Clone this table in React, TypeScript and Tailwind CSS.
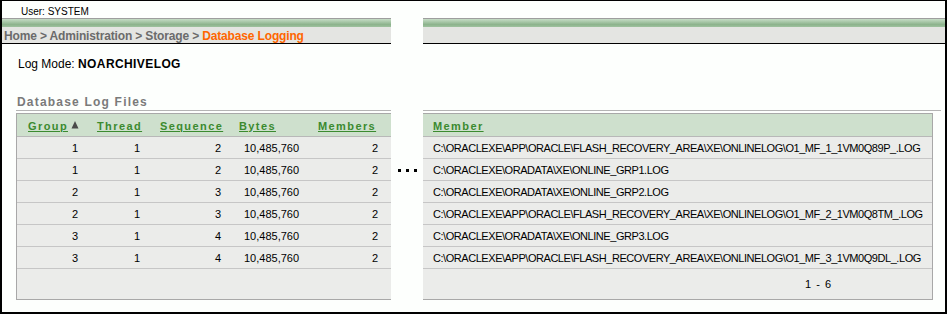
import type { ReactNode } from "react";

type LogFile = {
  group: number;
  thread: number;
  sequence: number;
  bytes: string;
  members: number;
  member: string;
};

const LOG_FILES: LogFile[] = [
  { group: 1, thread: 1, sequence: 2, bytes: "10,485,760", members: 2, member: "C:\\ORACLEXE\\APP\\ORACLE\\FLASH_RECOVERY_AREA\\XE\\ONLINELOG\\O1_MF_1_1VM0Q89P_.LOG" },
  { group: 1, thread: 1, sequence: 2, bytes: "10,485,760", members: 2, member: "C:\\ORACLEXE\\ORADATA\\XE\\ONLINE_GRP1.LOG" },
  { group: 2, thread: 1, sequence: 3, bytes: "10,485,760", members: 2, member: "C:\\ORACLEXE\\ORADATA\\XE\\ONLINE_GRP2.LOG" },
  { group: 2, thread: 1, sequence: 3, bytes: "10,485,760", members: 2, member: "C:\\ORACLEXE\\APP\\ORACLE\\FLASH_RECOVERY_AREA\\XE\\ONLINELOG\\O1_MF_2_1VM0Q8TM_.LOG" },
  { group: 3, thread: 1, sequence: 4, bytes: "10,485,760", members: 2, member: "C:\\ORACLEXE\\ORADATA\\XE\\ONLINE_GRP3.LOG" },
  { group: 3, thread: 1, sequence: 4, bytes: "10,485,760", members: 2, member: "C:\\ORACLEXE\\APP\\ORACLE\\FLASH_RECOVERY_AREA\\XE\\ONLINELOG\\O1_MF_3_1VM0Q9DL_.LOG" },
];

const COLS = "grid grid-cols-[71px_62px_81px_75px_85px]";

function Band({ children }: { children?: ReactNode }) {
  return (
    <div>
      <div className="h-px bg-[#9e9e9e]" />
      <div className="h-[8px] bg-[linear-gradient(to_bottom,#c6ddc6,#8cb38c_70%,#9fc29f)]" />
      <div className="h-[16px] whitespace-nowrap bg-[#e4e5e2] pl-[2px] text-[12px] font-bold leading-[18px] tracking-[-0.15px] text-[#6b6b6b]">
        {children}
      </div>
      <div className="h-px bg-black" />
    </div>
  );
}

function HeaderLink({ children }: { children: ReactNode }) {
  return <span className="tracking-[1.4px] text-[#3b8a2f] underline">{children}</span>;
}

function SortArrow() {
  return (
    <svg width="8" height="8" viewBox="0 0 8 8" className="ml-[3px] inline-block align-[1px]">
      <path d="M4 0 L7.5 7.5 L0.5 7.5 Z" fill="#4a4a4a" />
    </svg>
  );
}

export default function App() {
  return (
    <div className="h-[314px] w-[947px] border-x-2 border-b-2 border-t border-black bg-[#fdfffd] font-['Liberation_Sans',Arial,sans-serif] text-black">
      <div className="h-[17px] pl-[19px] pt-[4px] text-[10px] leading-[14px]">User: SYSTEM</div>

      <div className="flex">
        {/* left part: breadcrumb, log mode and the numeric columns */}
        <div className="w-[389px] shrink-0">
          <Band>
            Home &gt; Administration &gt; Storage &gt; <span className="text-[#ff6600]">Database Logging</span>
          </Band>

          <div className="mt-[13px] pl-[16px] text-[12px] leading-[14px]">
            Log Mode: <span className="font-bold tracking-[0.4px]">NOARCHIVELOG</span>
          </div>

          <div className="mt-[24px] pl-[15px] text-[12px] font-bold leading-[14px] tracking-[1.2px] text-[#7a7a7a]">
            Database Log Files
          </div>
          <div className="ml-[14px] mt-px h-px bg-[#b4b4b4]" />

          <div className="ml-[14px] mt-[2px] border-y border-l border-[#a8a8a8] text-[11px]">
            <div className={`${COLS} h-[23px] border-b border-[#b8b8b8] bg-[#cee0cd] font-bold leading-[24px]`}>
              <div className="pl-[11px]">
                <HeaderLink>Group</HeaderLink>
                <SortArrow />
              </div>
              <div className="pl-[9px]">
                <HeaderLink>Thread</HeaderLink>
              </div>
              <div className="pl-[10px]">
                <HeaderLink>Sequence</HeaderLink>
              </div>
              <div className="pl-[8px]">
                <HeaderLink>Bytes</HeaderLink>
              </div>
              <div className="pl-[12px]">
                <HeaderLink>Members</HeaderLink>
              </div>
            </div>

            {LOG_FILES.map((row, i) => (
              <div key={i} className={`${COLS} h-[22px] border-b border-[#c6c6c6] bg-[#ebecea] leading-[23px]`}>
                <div className="pr-[10px] text-right">{row.group}</div>
                <div className="pr-[10px] text-right">{row.thread}</div>
                <div className="pr-[10px] text-right">{row.sequence}</div>
                <div className="pl-[13px]">{row.bytes}</div>
                <div className="pr-[13px] text-right">{row.members}</div>
              </div>
            ))}

            <div className="h-[30px] bg-[#ebecea]" />
          </div>
        </div>

        {/* elided columns */}
        <div className="w-[32px] shrink-0 pl-[7px] pt-[151px]">
          <div className="flex gap-[5px]">
            <span className="size-[3px] bg-black" />
            <span className="size-[3px] bg-black" />
            <span className="size-[3px] bg-black" />
          </div>
        </div>

        {/* right part: member paths */}
        <div className="min-w-0 flex-1">
          <Band />
          <div className="h-[66px]" />
          <div className="mr-[4px] h-px bg-[#b4b4b4]" />

          <div className="mr-[12px] mt-[2px] border-y border-r border-[#a8a8a8] text-[11px]">
            <div className="h-[23px] border-b border-[#b8b8b8] bg-[#cee0cd] pl-[10px] font-bold leading-[24px]">
              <HeaderLink>Member</HeaderLink>
            </div>

            {LOG_FILES.map((row, i) => (
              <div
                key={i}
                className="h-[22px] whitespace-nowrap border-b border-[#c6c6c6] bg-[#ebecea] pl-[10px] leading-[23px] tracking-[-0.45px]"
              >
                {row.member}
              </div>
            ))}

            <div className="flex h-[30px] justify-end bg-[#ebecea] pr-[100px] leading-[30px] tracking-[1px]">1 - 6</div>
          </div>
        </div>
      </div>
    </div>
  );
}
